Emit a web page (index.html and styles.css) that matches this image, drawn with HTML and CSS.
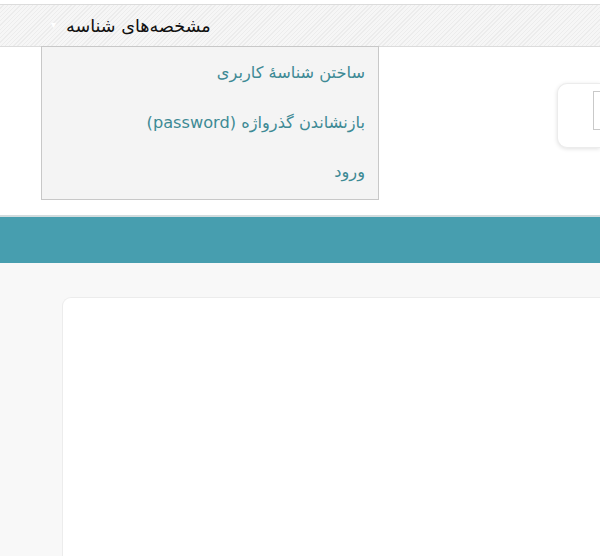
FILE: index.html
```html
<!DOCTYPE html>
<html lang="fa">
<head>
<meta charset="utf-8">
<title>مشخصه‌های شناسه</title>
<link rel="stylesheet" href="styles.css">
</head>
<body>
<div class="topbar">
  <div class="menu">
    <div class="menu-title"><span class="caret">▾</span><span class="title-text">مشخصه‌های شناسه</span></div>
    <ul class="dropdown">
      <li><a href="#">ساختن شناسهٔ کاربری</a></li>
      <li><a href="#">بازنشاندن گذرواژه (password)</a></li>
      <li><a href="#">ورود</a></li>
    </ul>
  </div>
</div>
<div class="header-area">
  <div class="search-box"><div class="search-input"></div></div>
</div>
<div class="teal-bar"></div>
<div class="content">
  <div class="card"></div>
</div>
</body>
</html>
```
FILE: styles.css
```css
html, body {
  margin: 0;
  padding: 0;
  background: #fff;
  font-family: "DejaVu Sans", "Noto Sans", sans-serif;
  overflow: hidden;
  height: 557px;
}
.topbar {
  margin-top: 4px;
  height: 41px;
  border-top: 1px solid #dcdcdc;
  border-bottom: 1px solid #dcdcdc;
  background-color: #f3f3f3;
  background-image: repeating-linear-gradient(135deg, #f6f6f6 0, #f6f6f6 2px, #ececec 2px, #ececec 3px);
  position: relative;
  z-index: 2;
}
.menu {
  position: relative;
  margin-left: 41px;
  width: 338px;
  height: 41px;
}
.menu-title {
  display: flex;
  align-items: center;
  height: 41px;
  font-size: 17.6px;
  color: #111;
}
.caret {
  color: #fff;
  font-size: 10px;
  width: 25px;
  text-align: center;
  margin-top: -2px;
}
.title-text {
  direction: rtl;
}
.dropdown {
  position: absolute;
  top: 41px;
  left: 0;
  width: 336px;
  height: 151px;
  margin: 0;
  padding: 1px 0 0 0;
  box-sizing: content-box;
  list-style: none;
  background: #f4f4f4;
  border: 1px solid #c8c8c8;
  direction: rtl;
}
.dropdown li {
  height: 49.5px;
  display: flex;
  align-items: center;
  padding-right: 13px;
}
.dropdown a {
  color: #3e8a95;
  text-decoration: none;
  font-size: 16.2px;
}
.header-area {
  height: 168px;
  position: relative;
}
.search-box {
  position: absolute;
  right: 0;
  top: 36px;
  width: 42px;
  height: 63px;
  border: 1px solid #ececec;
  border-right: none;
  border-radius: 10px 0 0 10px;
  box-shadow: 0 1px 4px rgba(0,0,0,0.12);
  background: #fff;
}
.search-input {
  margin: 7px 0 0 35px;
  height: 37px;
  border: 1px solid #c9c9c9;
  border-right: none;
  background: #fff;
}
.teal-bar {
  border-top: 2px solid #d2dcde;
  height: 46px;
  background: #479eaf;
}
.content {
  background: #f8f8f8;
  padding: 34px 0 0 62px;
  height: 259px;
}
.card {
  background: #fff;
  border: 1px solid #ececec;
  border-right: none;
  border-bottom: none;
  border-radius: 9px 0 0 0;
  height: 258px;
}
```
